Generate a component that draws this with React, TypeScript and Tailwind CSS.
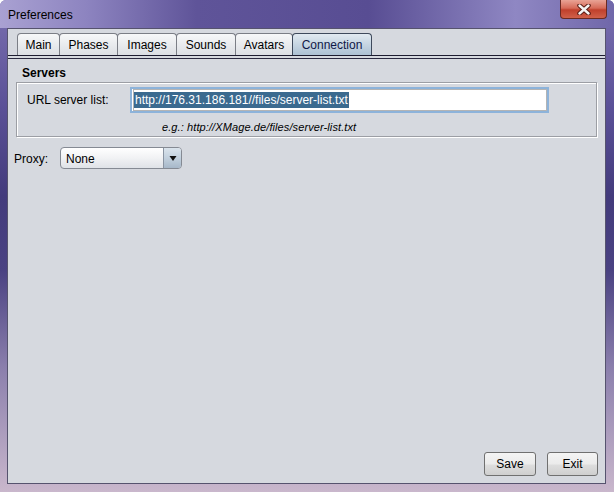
import React from 'react'

const tabs = [
  { name: 'Main', w: 'w-[43px]' },
  { name: 'Phases', w: 'w-[59px]' },
  { name: 'Images', w: 'w-[60px]' },
  { name: 'Sounds', w: 'w-[60px]' },
  { name: 'Avatars', w: 'w-[58px]' },
  { name: 'Connection', w: 'w-[80px]' },
]

function CloseGlyph() {
  return (
    <svg width="14" height="11" viewBox="0 0 14 11">
      <path d="M2.5 1.5 L11.5 9.5 M11.5 1.5 L2.5 9.5" stroke="#5a1c14" strokeWidth="4.5" strokeLinecap="round" />
      <path d="M2.5 1.5 L11.5 9.5 M11.5 1.5 L2.5 9.5" stroke="#f4f4f4" strokeWidth="2.4" strokeLinecap="round" />
    </svg>
  )
}

export default function App() {
  return (
    <div className="w-[614px] h-[492px] flex flex-col overflow-hidden rounded-t-[6px] bg-[linear-gradient(180deg,#7a70b0_0%,#5a5097_22%,#433b7c_40%,#4a4282_55%,#8c80ad_75%,#c9b7cc_100%)] font-['Liberation_Sans',Arial,sans-serif] text-[12px] text-black">
      {/* title bar */}
      <div className="h-[28px] shrink-0 relative flex items-center pl-[8px] pt-[2px] bg-[linear-gradient(90deg,#a9a1d2_0%,#8d84c0_14%,#5f5499_32%,#584d93_60%,#8f87c3_84%,#7067a9_100%)]">
        <span className="text-[12px] text-black">Preferences</span>
        <div className="absolute right-[7px] top-0 w-[47px] h-[19px] rounded-b-[4px] border border-t-0 border-[#6b2a22] bg-[linear-gradient(180deg,#e9a395_0%,#d66a58_45%,#c0402c_55%,#d0604a_100%)] flex items-center justify-center">
          <CloseGlyph />
        </div>
      </div>

      {/* content */}
      <div className="flex-1 ml-[7px] mr-[8px] mb-[8px] bg-[#d6d9df] border border-[#56536e] flex flex-col">
        {/* tab strip */}
        <div className="h-[27px] shrink-0 flex items-end pl-[9px] border-b border-[#1d1c30]">
          {tabs.map(t => {
            const sel = t.name === 'Connection'
            return (
              <div
                key={t.name}
                className={`${t.w} h-[22px] -mr-px rounded-t-[4px] border border-b-0 flex items-center justify-center ${
                  sel
                    ? 'border-[#3f4a5c] text-[#101848] bg-[linear-gradient(180deg,#e2eaf1_0%,#c6d5e2_50%,#adc1d3_100%)]'
                    : 'border-[#7b7e86] bg-[linear-gradient(180deg,#f7f8f9_0%,#e9ebee_50%,#dcdfe4_100%)]'
                }`}
              >
                {t.name}
              </div>
            )
          })}
        </div>
        <div className="mt-[2px] h-px bg-[#2a2940]" />

        {/* Servers */}
        <div className="pl-[14px] pt-[7px] font-bold leading-[14px]">Servers</div>
        <div className="ml-[8px] mr-[8px] mt-[2px] h-[55px] border border-[#9c9ea4] shadow-[inset_1px_1px_0_#ffffff,1px_1px_0_#ffffff] pt-[4px]">
          <div className="flex items-center">
            <span className="pl-[10px] w-[113px]">URL server list:</span>
            <div className="w-[419px] h-[26px] border-2 border-[#8db3da] bg-white flex items-center pl-[1px]">
              <div className="h-[22px] w-full border border-[#b4b4b4] flex items-center">
                <span className="bg-[#3b6a8f] text-white text-[12px] leading-[16px] px-px">http://176.31.186.181//files/server-list.txt</span>
              </div>
            </div>
          </div>
          <div className="pl-[145px] pt-[8px] italic text-[11px] leading-[12px] tracking-[0.1px] text-black">e.g.: http://XMage.de/files/server-list.txt</div>
        </div>

        {/* Proxy */}
        <div className="flex items-start mt-[10px] pl-[6px]">
          <span className="w-[46px] pt-[3px]">Proxy:</span>
          <div className="w-[122px] h-[22px] rounded-[4px] border border-[#858a93] bg-[linear-gradient(180deg,#ffffff_0%,#f1f2f4_50%,#dfe2e7_100%)] flex overflow-hidden">
            <span className="flex-1 pl-[5px] pt-[4px] leading-[14px]">None</span>
            <div className="w-[18px] border-l border-[#8a94a2] bg-[linear-gradient(180deg,#dbe4ec_0%,#c2d0dd_50%,#a7b8c9_100%)] flex items-center justify-center">
              <svg width="8" height="7" viewBox="0 0 8 7">
                <path d="M0.5 1 L7.5 1 L4 6 Z" fill="#111" />
              </svg>
            </div>
          </div>
        </div>

        <div className="flex-1" />

        {/* buttons */}
        <div className="flex justify-end gap-[11px] pr-[7px] pb-[7px]">
          <div className="w-[52px] h-[24px] rounded-[3px] border border-[#707070] bg-[linear-gradient(180deg,#f4f4f4_0%,#ebebeb_50%,#dddddd_55%,#cfcfcf_100%)] flex items-center justify-center">Save</div>
          <div className="w-[51px] h-[24px] rounded-[3px] border border-[#707070] bg-[linear-gradient(180deg,#f4f4f4_0%,#ebebeb_50%,#dddddd_55%,#cfcfcf_100%)] flex items-center justify-center">Exit</div>
        </div>
      </div>
    </div>
  )
}
